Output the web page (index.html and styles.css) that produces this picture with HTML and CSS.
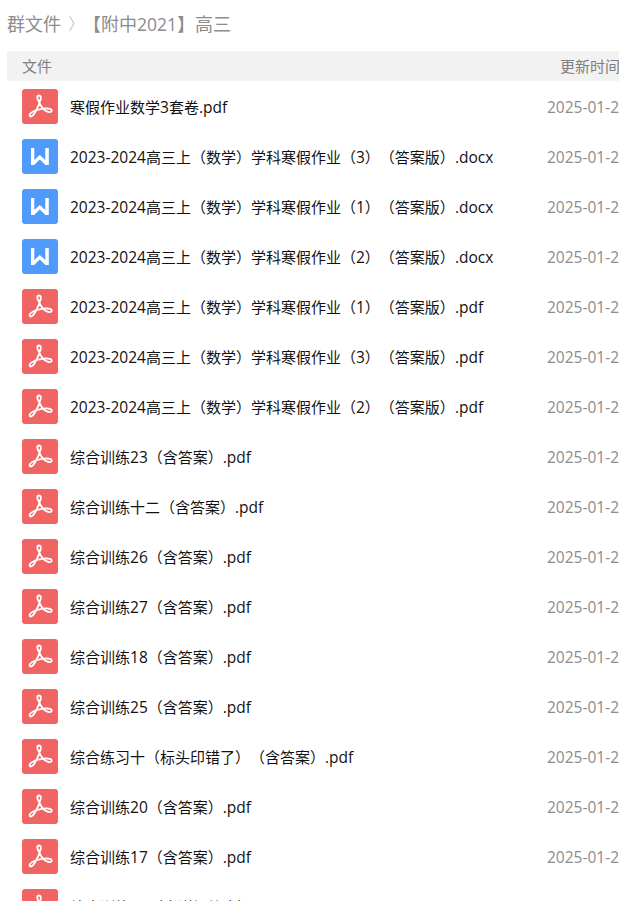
FILE: index.html
```html
<!DOCTYPE html>
<html lang="zh-CN">
<head>
    <meta charset="UTF-8">
    <title>群文件</title>
    <link rel="stylesheet" href="styles.css">
</head>
<body>

<svg class="sprite" aria-hidden="true">
    <symbol id="icon-pdf" viewBox="0 0 36 35">
        <path d="M17.200 13C14.500 9.500 14.800 6.500 17 6.500S19.500 9.500 17.600 13C16.800 16.500 15 20 12.600 24C10.500 28 7.500 28.500 7.600 26C7.800 23.500 11 22.300 15 21C19 19.800 22 19.200 25.500 19.500C29.500 19.700 30.500 21.500 29.300 22.600C27.500 24 23.500 22 21.200 19.800C19 17.500 18 15.500 17.200 13Z"/>
    </symbol>
    <symbol id="icon-doc" viewBox="0 0 36 35">
        <path d="M9 9H12.300V21L17.800 16L23.300 21V9H26.800V26H23.500L17.800 20.500L12.100 26H9Z"/>
    </symbol>
</svg>

<div class="breadcrumb">
    <span>群文件</span>
    <svg class="arrow" viewBox="0 0 8 18"><path d="M1.500 1L6 9L1.500 17"/></svg>
    <span>【附中<span class="latin">2021</span>】高三</span>
</div>

<div class="table-head">
    <span>文件</span>
    <span class="col-date">更新时间</span>
</div>

<ul class="file-list" id="lista"></ul>

<script src="files.js"></script>
</body>
</html>
```
FILE: styles.css
```css
* {
    box-sizing: border-box;
}

body {
    margin: 0;
    height: 901px;
    overflow: hidden;
    background-color: #fff;
    font-family: "Noto Sans CJK SC", sans-serif;
    font-size: 15px;
    text-spacing-trim: space-all;
    white-space: nowrap;
}

.sprite {
    display: none;
}

.latin {
    font-family: "Open Sans", "Noto Sans CJK SC", sans-serif;
    font-size: 1.035em;
}

.breadcrumb {
    display: flex;
    align-items: center;
    height: 51px;
    padding: 0 0 5px 7px;
    font-size: 18px;
    color: #8c8c8c;
}

.breadcrumb .latin {
    font-size: 17.5px;
}

.arrow {
    width: 8px;
    height: 17px;
    margin: 0 7px;
    fill: none;
    stroke: #c8c8c8;
    stroke-width: 1.2;
}

.table-head {
    display: flex;
    align-items: center;
    height: 30px;
    margin-left: 7px;
    padding: 0 0 2px 15px;
    background-color: #f2f2f2;
    color: #808080;
}

.table-head .col-date {
    margin-left: 508px;
}

.file-list {
    list-style: none;
    margin: 0;
    padding: 0;
}

.file-list li {
    display: flex;
    align-items: center;
    height: 50px;
    padding-left: 22px;
}

.icon {
    flex: none;
    width: 36px;
    height: 35px;
    border-radius: 3px;
}

.icon-pdf {
    background-color: #f16464;
    fill: none;
    stroke: #fff;
    stroke-width: 1.8;
}

.icon-doc {
    background-color: #509afb;
    fill: #fff;
}

.name {
    flex: none;
    width: 477px;
    margin-left: 12px;
    padding-top: 1px;
    color: #111;
}

.date {
    flex: none;
    padding-top: 1px;
    color: #8c8c8c;
}
```
FILE: files.js
```js
const files = [
    '寒假作业数学3套卷.pdf',
    '2023-2024高三上（数学）学科寒假作业（3）（答案版）.docx',
    '2023-2024高三上（数学）学科寒假作业（1）（答案版）.docx',
    '2023-2024高三上（数学）学科寒假作业（2）（答案版）.docx',
    '2023-2024高三上（数学）学科寒假作业（1）（答案版）.pdf',
    '2023-2024高三上（数学）学科寒假作业（3）（答案版）.pdf',
    '2023-2024高三上（数学）学科寒假作业（2）（答案版）.pdf',
    '综合训练23（含答案）.pdf',
    '综合训练十二（含答案）.pdf',
    '综合训练26（含答案）.pdf',
    '综合训练27（含答案）.pdf',
    '综合训练18（含答案）.pdf',
    '综合训练25（含答案）.pdf',
    '综合练习十（标头印错了）（含答案）.pdf',
    '综合训练20（含答案）.pdf',
    '综合训练17（含答案）.pdf',
    '综合训练24（含详解答案）.pdf'
];

let html = '';
files.forEach(f => {
    const type = f.endsWith('.pdf') ? 'pdf' : 'doc';
    const name = f.replace(/[\w.-]+/g, '<span class="latin">$&</span>');
    html += `
        <li>
            <svg class="icon icon-${type}"><use href="#icon-${type}"></use></svg>
            <span class="name">${name}</span>
            <span class="date latin">2025-01-2</span>
        </li>
    `;
});
document.getElementById('lista').innerHTML = html;
```
